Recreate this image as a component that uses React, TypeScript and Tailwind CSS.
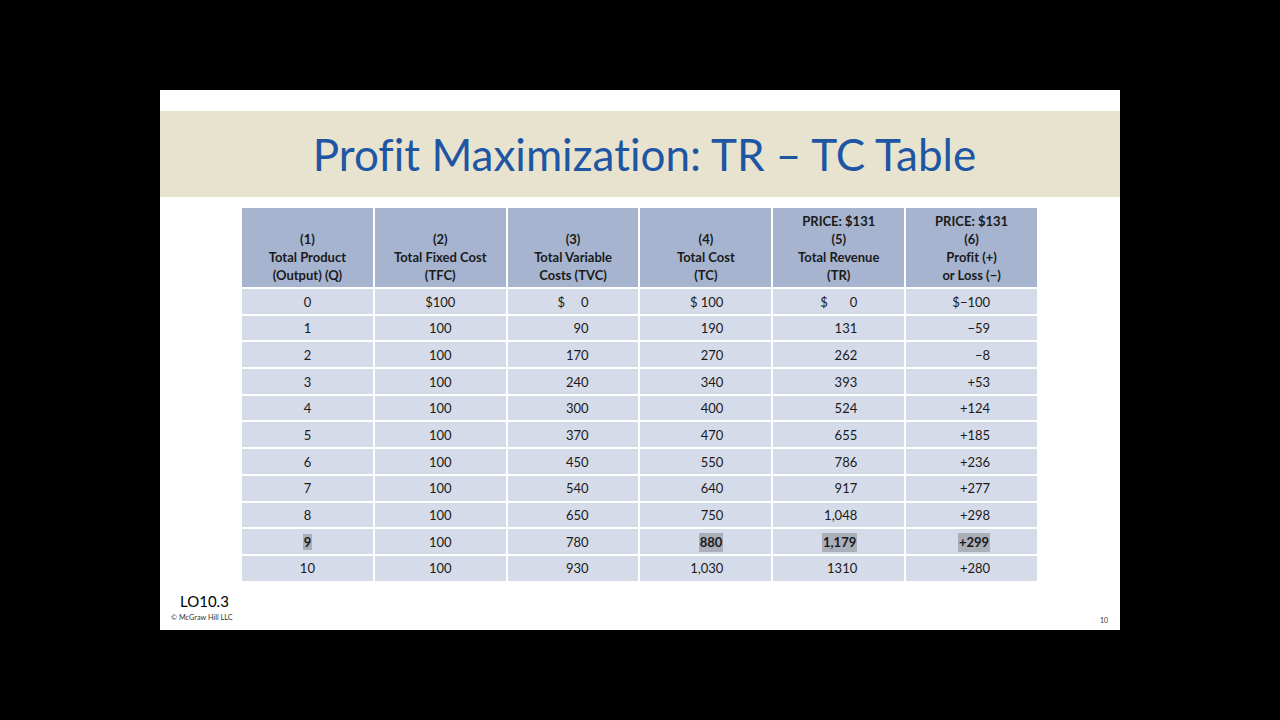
import React from "react";

type Cell = { v: string; dollar?: boolean; hl?: boolean };

const rows: Cell[][] = [
  [{ v: "0" }, { v: "$100" }, { v: "0", dollar: true }, { v: "$ 100" }, { v: "0", dollar: true }, { v: "$−100" }],
  [{ v: "1" }, { v: "100" }, { v: "90" }, { v: "190" }, { v: "131" }, { v: "−59" }],
  [{ v: "2" }, { v: "100" }, { v: "170" }, { v: "270" }, { v: "262" }, { v: "−8" }],
  [{ v: "3" }, { v: "100" }, { v: "240" }, { v: "340" }, { v: "393" }, { v: "+53" }],
  [{ v: "4" }, { v: "100" }, { v: "300" }, { v: "400" }, { v: "524" }, { v: "+124" }],
  [{ v: "5" }, { v: "100" }, { v: "370" }, { v: "470" }, { v: "655" }, { v: "+185" }],
  [{ v: "6" }, { v: "100" }, { v: "450" }, { v: "550" }, { v: "786" }, { v: "+236" }],
  [{ v: "7" }, { v: "100" }, { v: "540" }, { v: "640" }, { v: "917" }, { v: "+277" }],
  [{ v: "8" }, { v: "100" }, { v: "650" }, { v: "750" }, { v: "1,048" }, { v: "+298" }],
  [{ v: "9", hl: true }, { v: "100" }, { v: "780" }, { v: "880", hl: true }, { v: "1,179", hl: true }, { v: "+299", hl: true }],
  [{ v: "10" }, { v: "100" }, { v: "930" }, { v: "1,030" }, { v: "1310" }, { v: "+280" }],
];

const headers: string[][] = [
  ["(1)", "Total Product", "(Output) (Q)"],
  ["(2)", "Total Fixed Cost", "(TFC)"],
  ["(3)", "Total Variable", "Costs (TVC)"],
  ["(4)", "Total Cost", "(TC)"],
  ["PRICE: $131", "(5)", "Total Revenue", "(TR)"],
  ["PRICE: $131", "(6)", "Profit (+)", "or Loss (−)"],
];

const blockW = ["", "", "w-[31px]", "w-[35px]", "w-[37px]", "w-[37px]"];

function Value({ c, col }: { c: Cell; col: number }) {
  const txt = c.hl ? (
    <span className="bg-[#abafba] font-bold px-[1px]">{c.v}</span>
  ) : (
    <span>{c.v}</span>
  );
  if (col < 2) return <div className="text-center">{txt}</div>;
  if (c.dollar)
    return (
      <div className={`${blockW[col]} flex justify-between`}>
        <span>$</span>
        {txt}
      </div>
    );
  return <div className={`${blockW[col]} text-right whitespace-nowrap flex justify-end`}>{txt}</div>;
}

export default function App() {
  return (
    <div
      className="w-[1280px] h-[720px] bg-black flex items-center justify-center [font-variant-ligatures:none]"
      style={{ fontFamily: "Lato, 'Open Sans', sans-serif" }}
    >
      <div className="w-[960px] h-[540px] bg-white flex flex-col pt-[21px]">
        <div className="h-[86px] bg-[#e7e3cf] flex items-center justify-center pl-[9px]">
          <h1 className="text-[44px] text-[#1f56a4] leading-none pb-[1px]">
            Profit Maximization: TR – TC Table
          </h1>
        </div>
        <div className="mt-[11px] ml-[82px] w-[795px] grid grid-cols-6 gap-[2px] bg-white text-[13px] text-[#1a1a1a]">
          {headers.map((h, i) => (
            <div
              key={i}
              className="h-[79px] bg-[#a6b4cf] flex flex-col justify-end items-center pb-[3px] font-bold leading-[18px]"
            >
              {h.map((l, j) => (
                <div key={j}>{l}</div>
              ))}
            </div>
          ))}
          {rows.map((r, ri) =>
            r.map((c, ci) => (
              <div
                key={`${ri}-${ci}`}
                className="h-[24.7px] bg-[#d6dbe9] flex items-center justify-center pt-[2px]"
              >
                <Value c={c} col={ci} />
              </div>
            ))
          )}
        </div>
        <div className="flex-1 flex items-end justify-between pl-[11px] pr-[12px] pb-[5px]">
          <div className="flex flex-col pb-[3px]">
            <div className="text-[15px] text-black leading-[18px] ml-[9px]">LO10.3</div>
            <div className="text-[7.3px] text-[#333] leading-[9px] mt-[3px]">© McGraw Hill LLC</div>
          </div>
          <div className="text-[7px] text-[#333] leading-[9px]">10</div>
        </div>
      </div>
    </div>
  );
}
